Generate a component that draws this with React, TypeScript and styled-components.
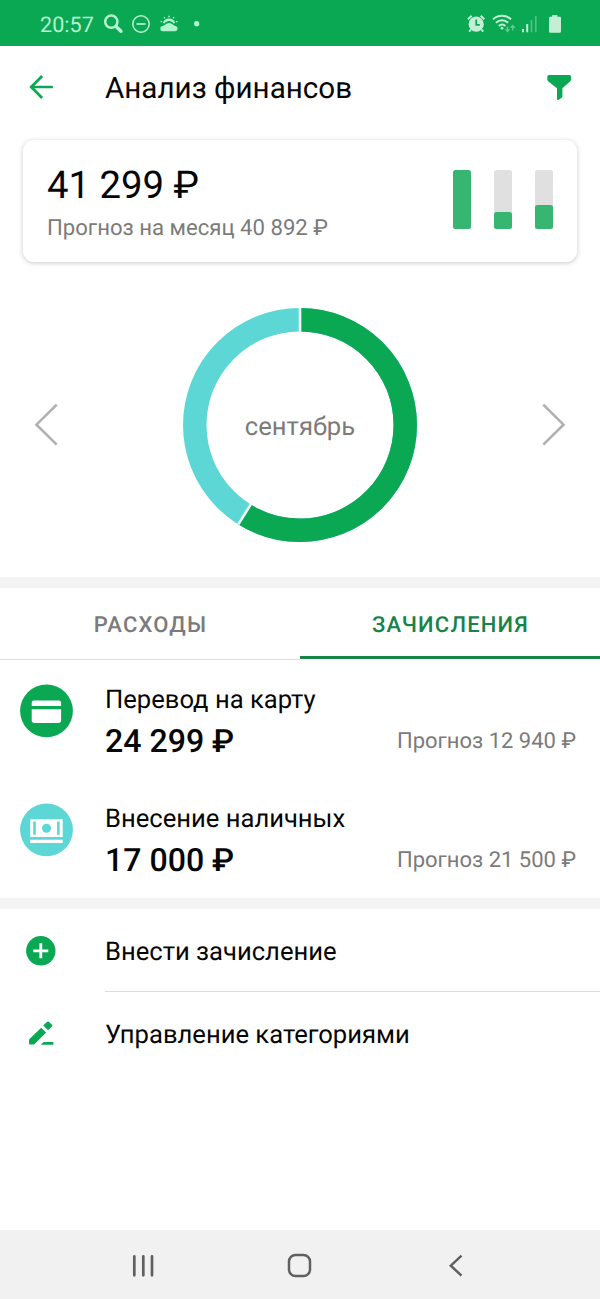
import React from "react";
import styled, { createGlobalStyle } from "styled-components";

const GREEN = "#0ba854";
const TEAL = "#5cd7d6";
const GREY = "#7b7b7b";

const GlobalStyle = createGlobalStyle`
  * { box-sizing: border-box; }
  body { margin: 0; background: #fff; font-family: Roboto, "Noto Sans", sans-serif; color: #060606; text-rendering: geometricPrecision; }
  svg { display: block; flex: none; }
`;

const Screen = styled.div`
  width: 600px;
  height: 1299px;
  display: flex;
  flex-direction: column;
  background: #fff;
  overflow: hidden;
`;

const StatusBar = styled.header`
  height: 46px;
  flex: none;
  display: flex;
  align-items: center;
  padding: 2px 38px 0 40px;
  background: ${GREEN};
  color: #b4f3cf;
`;

const Clock = styled.span`
  width: 64px;
  padding-top: 3px;
  font-size: 21.6px;
  line-height: 26px;
  white-space: nowrap;
`;

const StatusIcons = styled.div<{ $right?: boolean }>`
  display: flex;
  margin-left: ${(p) => (p.$right ? "auto" : "0")};
`;

const TitleBar = styled.div`
  height: 94px;
  flex: none;
  display: flex;
  align-items: flex-start;
  padding: 24px 24px 0 26px;
`;

const Title = styled.h1`
  margin: 0 auto 0 49px;
  padding-top: 1px;
  font-size: 29.6px;
  font-weight: 400;
  line-height: 36px;
  white-space: nowrap;
`;

const SummaryCard = styled.section`
  height: 122px;
  flex: none;
  margin: 0 23px;
  padding: 24px 24px 0;
  border-radius: 11px;
  box-shadow: 0 1px 5px rgba(0, 0, 0, 0.22);
  display: flex;
  justify-content: space-between;
`;

const Total = styled.div`
  padding-top: 1px;
  font-size: 38.3px;
  line-height: 42px;
  white-space: nowrap;
`;

const TotalForecast = styled.div`
  margin-top: 7px;
  font-size: 22.15px;
  line-height: 28px;
  color: ${GREY};
  white-space: nowrap;
`;

const Bars = styled.div`
  display: flex;
  gap: 23px;
  padding-top: 6px;
`;

const Bar = styled.div`
  width: 18px;
  height: 58.5px;
  border-radius: 2.5px;
  background: #e0e0e0;
  display: flex;
  align-items: flex-end;
`;

const BarFill = styled.div<{ $height: number }>`
  width: 100%;
  height: ${(p) => p.$height}px;
  border-radius: 2.5px;
  background: #36b671;
`;

const MonthPicker = styled.section`
  height: 315px;
  flex: none;
  display: flex;
  justify-content: space-between;
  align-items: center;
  padding: 11px 34px 0;
`;

const Donut = styled.div`
  display: grid;
  place-items: center;
  & > * { grid-area: 1 / 1; }
`;

const Month = styled.span`
  padding-top: 3px;
  font-size: 25.6px;
  line-height: 32px;
  color: ${GREY};
`;

const Band = styled.div`
  height: 11px;
  flex: none;
  background: #f4f4f4;
`;

const Tabs = styled.nav`
  height: 72px;
  flex: none;
  display: flex;
`;

const Tab = styled.div<{ $active?: boolean }>`
  flex: 1;
  padding-top: 24px;
  padding-left: 1px;
  text-align: center;
  font-size: 22px;
  font-weight: 500;
  line-height: 28px;
  letter-spacing: 1.2px;
  color: ${(p) => (p.$active ? "#168349" : GREY)};
  border-bottom: ${(p) => (p.$active ? "3px solid #168349" : "1.5px solid #dcdcdc")};
  height: ${(p) => (p.$active ? "71px" : "72px")};
`;

const Categories = styled.section`
  height: 238px;
  flex: none;
  display: flex;
  flex-direction: column;
`;

const Category = styled.div`
  height: 119px;
  display: flex;
  padding: 24px 24px 0 20px;
`;

const CategoryBody = styled.div`
  flex: 1;
  margin-left: 32px;
`;

const CategoryName = styled.div`
  padding-top: 1px;
  font-size: 25.6px;
  line-height: 30px;
`;

const AmountRow = styled.div`
  display: flex;
  justify-content: space-between;
  align-items: flex-start;
  margin-top: 7px;
  line-height: 38px;
  white-space: nowrap;
`;

const Amount = styled.span`
  font-size: 32.1px;
  font-weight: 500;
`;

const Forecast = styled.span`
  padding-top: 1px;
  font-size: 22px;
  color: ${GREY};
`;

const Actions = styled.section`
  flex: 1;
`;

const Action = styled.div`
  display: flex;
  align-items: center;
  height: 83px;
  padding-left: 25px;
`;

const ActionLabel = styled.div<{ $divided?: boolean }>`
  flex: 1;
  margin-left: 48px;
  height: 83px;
  line-height: 86px;
  font-size: 25.6px;
  border-bottom: ${(p) => (p.$divided ? "1.5px solid #dcdcdc" : "none")};
`;

const SystemNav = styled.footer`
  height: 69px;
  flex: none;
  display: flex;
  background: #f1f1f1;
  align-items: center;
  justify-content: center;
  gap: 124px;
  padding-top: 2px;
`;

const R = 105.25;
const CIRC = 2 * Math.PI * R;
const SHARE = 24299 / 41299;

const StatusLeft = () => (
  <svg width="100" height="26" viewBox="104 11 100 26" fill="none" stroke="#b4f3cf">
    <circle cx="111.300" cy="21.700" r="6.100" strokeWidth="2.500" />
    <path d="M116 26.400l5 4.800" strokeWidth="3.400" strokeLinecap="round" />
    <circle cx="141" cy="24" r="8.200" strokeWidth="1.500" />
    <path d="M136.500 24h9" strokeWidth="1.700" />
    <path d="M162.800 31.300a2.700 2.700 0 0 1-.6-5.300c1.300-.2 2-.6 2.900-1.300a5.800 5.800 0 0 1 8 0c.8.800 1.500 1.100 2.500 1.300a2.700 2.700 0 0 1-.4 5.300z" fill="#b4f3cf" stroke="none" />
    <path d="M163.800 23.300a5.500 5.500 0 0 1 10.500 0" strokeWidth="1.900" />
    <path d="M165.500 21.800a5 5 0 0 1 7.200 0" strokeWidth="1.500" />
    <path d="M169 15.700v1.600M164 17.200l.9 1.200M174.100 17.200l-.9 1.200M160.600 21.300l1.500.5M177.500 21.300l-1.500.5" strokeWidth="1.400" />
    <circle cx="196.700" cy="23.700" r="2.600" fill="#b4f3cf" stroke="none" />
  </svg>
);

const StatusRight = () => (
  <svg width="96" height="26" viewBox="466 11 96 26" fill="none" stroke="#c4efd5">
    <circle cx="476.200" cy="24.200" r="7.600" fill="#c4efd5" stroke="none" />
    <path d="M476.200 19.500v5.300h3.600" stroke={GREEN} strokeWidth="1.700" />
    <path d="M468 19.200l3.600-3.400M484.300 19.200l-3.600-3.400M470.800 29.500l-1.600 2.200M481.600 29.500l1.600 2.200" strokeWidth="2" />
    <path d="M493 19.400c5-4.800 13-4.800 18 0M496 22.800c3.500-3.400 8.700-3.400 12 0M498.800 26c2-2 4.600-2 6.500 0" strokeWidth="2" />
    <circle cx="502" cy="28.200" r="1.400" fill="#c4efd5" stroke="none" />
    <g stroke="#62cb92" strokeWidth="1.400">
      <path d="M507.500 26.500v5M505.500 29.300l2 2.200 2-2.200M512.700 30.500v-5M510.700 27.700l2-2.200 2 2.200" />
    </g>
    <path d="M523 29v3.200M527.200 24v8.200" strokeWidth="2" />
    <path d="M531.500 20v12.200M535.800 16v16.200" stroke="#4fc383" strokeWidth="1.700" />
    <path d="M552.200 15h5.200v1.800h2.400a1.200 1.200 0 0 1 1.200 1.200v13.200a1.500 1.500 0 0 1-1.500 1.500h-9a1.500 1.500 0 0 1-1.500-1.500v-13.200a1.200 1.200 0 0 1 1.200-1.200h2z" fill="#c4efd5" stroke="none" />
  </svg>
);

const BackArrow = () => (
  <svg width="30" height="34" viewBox="26 70 30 34" fill="none" stroke={GREEN} strokeWidth="2.700" strokeLinecap="square">
    <path d="M31.500 87h20M41.200 77l-10 10 10 10" />
  </svg>
);

const Funnel = () => (
  <svg width="30" height="34" viewBox="546 70 30 34" fill={GREEN}>
    <path d="M549 75h20.400a1.700 1.700 0 0 1 1.700 1.700v2.600c0 .9-.4 1.700-1.100 2.300l-7.600 6.600v8c0 .7-.3 1.200-.8 1.600l-2.700 2c-1 .6-1.900 0-1.900-1v-10.600l-8.600-6.600a3 3 0 0 1-1.100-2.300v-2.600a1.700 1.700 0 0 1 1.700-1.700z" />
  </svg>
);

const Chevron = ({ next }: { next?: boolean }) => (
  <svg width="25" height="44" viewBox="0 0 25 44" fill="none" stroke="#b0b0b0" strokeWidth="2.600">
    <path d={next ? "M2.300 1.700l20.200 20-20.200 20" : "M22.700 1.700l-20.200 20 20.200 20"} />
  </svg>
);

const Ring = () => (
  <svg width="234" height="234" viewBox="0 0 234 234" fill="none">
    <g transform="rotate(-90 117 117)" strokeWidth="23.500">
      <circle cx="117" cy="117" r={R} stroke={TEAL} />
      <circle cx="117" cy="117" r={R} stroke={GREEN} strokeDasharray={`${CIRC * SHARE} ${CIRC}`} />
    </g>
    <g stroke="#effdfa" strokeWidth="2.600">
      <path d="M117 0v25" />
      <path d="M117 0v25" transform={`rotate(${SHARE * 360} 117 117)`} />
    </g>
  </svg>
);

const CardIcon = () => (
  <svg width="53" height="54" viewBox="0 0 53 54">
    <circle cx="26.500" cy="26.800" r="26.400" fill={GREEN} />
    <path d="M11.700 22v-3.300a2.300 2.300 0 0 1 2.300-2.300h24.800a2.300 2.300 0 0 1 2.300 2.300v3.300zM11.700 25.200h29.400v11.100a2.600 2.600 0 0 1-2.600 2.600h-24.200a2.600 2.600 0 0 1-2.600-2.600z" fill="#fff" />
  </svg>
);

const CashIcon = () => (
  <svg width="53" height="54" viewBox="0 0 53 54">
    <circle cx="26.500" cy="26.800" r="26.400" fill={TEAL} />
    <path d="M10.200 16.200h32.500v17.800h-32.500zM10.200 36.800h32.500v3.200h-32.500z" fill="#fff" />
    <circle cx="26.500" cy="25.300" r="4.500" fill={TEAL} />
    <path d="M14.500 18.600v13.200M38.400 18.600v13.200" stroke={TEAL} strokeWidth="2.600" />
  </svg>
);

const PlusIcon = () => (
  <svg width="32" height="32" viewBox="0 0 32 32">
    <circle cx="15.800" cy="15.800" r="14.700" fill={GREEN} />
    <path d="M15.800 8.300v15M8.300 15.800h15" stroke="#fff" strokeWidth="2.800" />
  </svg>
);

const PencilIcon = () => (
  <svg width="32" height="32" viewBox="25 1018 32 32" fill={GREEN}>
    <path d="M41.200 1027.700l4.900 4.700-11.500 11.500c-.3.400-.7.600-1.200.6h-3.400a1 1 0 0 1-1-1v-3.200c0-.5.200-.9.500-1.200z" />
    <path d="M43.200 1025.600l3.600-3.600c.8-.8 1.600-.8 2.400 0l2.500 2.500c.8.800.8 1.500 0 2.300l-3.600 3.500z" />
    <path d="M43.600 1042h9.800v2.800h-12.700z" />
  </svg>
);

const NavIcons = {
  recents: (
    <svg width="32" height="32" viewBox="0 0 32 32" stroke="#606060" strokeWidth="2.700" strokeLinecap="round">
      <path d="M6.300 6.300v19M15.300 6.300v19M24 6.300v19" />
    </svg>
  ),
  home: (
    <svg width="32" height="32" viewBox="0 0 32 32" fill="none" stroke="#606060" strokeWidth="2.500">
      <rect x="5" y="5" width="21" height="21" rx="6.500" />
    </svg>
  ),
  back: (
    <svg width="32" height="32" viewBox="0 0 32 32" fill="none" stroke="#606060" strokeWidth="2.500">
      <path d="M21.500 5.700l-10.700 10 10.700 10" />
    </svg>
  ),
};

const bars = [58.5, 16.5, 23.5];

const categories = [
  { name: "Перевод на карту", amount: "24 299 ₽", forecast: "Прогноз 12 940 ₽", icon: <CardIcon /> },
  { name: "Внесение наличных", amount: "17 000 ₽", forecast: "Прогноз 21 500 ₽", icon: <CashIcon /> },
];

export default function App() {
  return (
    <>
      <GlobalStyle />
      <Screen>
        <StatusBar>
          <Clock>20:57</Clock>
          <StatusIcons><StatusLeft /></StatusIcons>
          <StatusIcons $right><StatusRight /></StatusIcons>
        </StatusBar>
        <TitleBar>
          <BackArrow />
          <Title>Анализ финансов</Title>
          <Funnel />
        </TitleBar>
        <SummaryCard>
          <div>
            <Total>41 299 ₽</Total>
            <TotalForecast>Прогноз на месяц 40 892 ₽</TotalForecast>
          </div>
          <Bars>
            {bars.map((h) => (
              <Bar key={h}><BarFill $height={h} /></Bar>
            ))}
          </Bars>
        </SummaryCard>
        <MonthPicker>
          <Chevron />
          <Donut>
            <Ring />
            <Month>сентябрь</Month>
          </Donut>
          <Chevron next />
        </MonthPicker>
        <Band />
        <Tabs>
          <Tab>РАСХОДЫ</Tab>
          <Tab $active>ЗАЧИСЛЕНИЯ</Tab>
        </Tabs>
        <Categories>
          {categories.map((c) => (
            <Category key={c.name}>
              {c.icon}
              <CategoryBody>
                <CategoryName>{c.name}</CategoryName>
                <AmountRow>
                  <Amount>{c.amount}</Amount>
                  <Forecast>{c.forecast}</Forecast>
                </AmountRow>
              </CategoryBody>
            </Category>
          ))}
        </Categories>
        <Band />
        <Actions>
          <Action>
            <PlusIcon />
            <ActionLabel $divided>Внести зачисление</ActionLabel>
          </Action>
          <Action>
            <PencilIcon />
            <ActionLabel>Управление категориями</ActionLabel>
          </Action>
        </Actions>
        <SystemNav>
          {NavIcons.recents}
          {NavIcons.home}
          {NavIcons.back}
        </SystemNav>
      </Screen>
    </>
  );
}
